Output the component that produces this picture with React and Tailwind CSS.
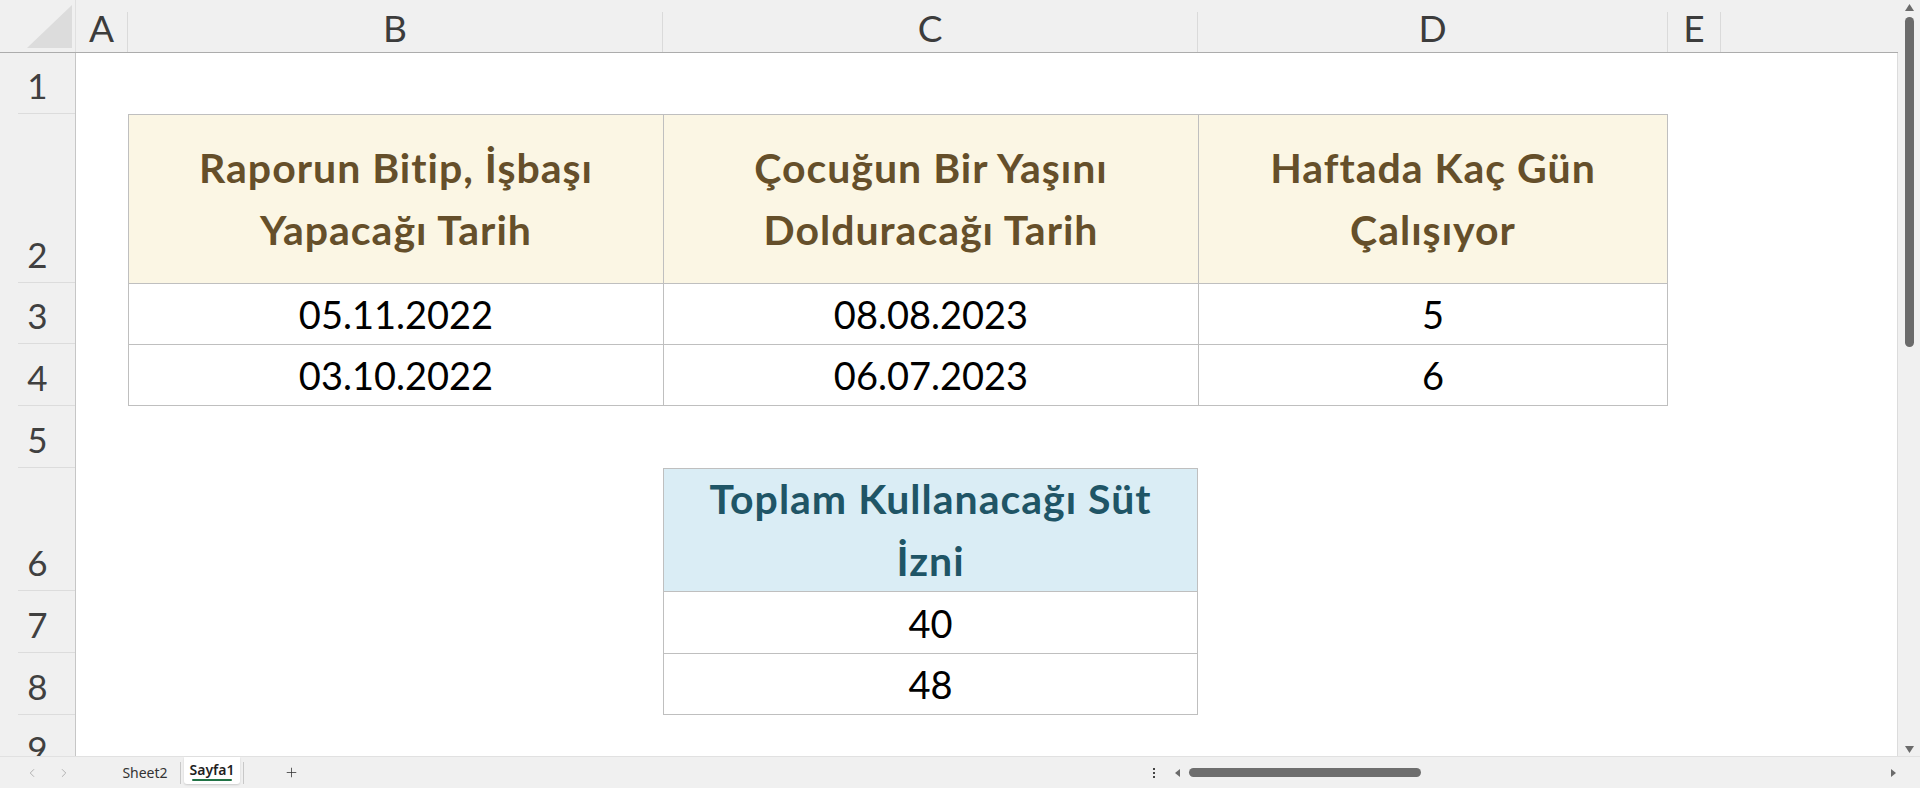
import React from "react";
import { ChevronLeft, ChevronRight, Plus } from "lucide-react";

const COLS = [
  { id: "A", w: "w-[52px]" },
  { id: "B", w: "w-[535px]" },
  { id: "C", w: "w-[535px]" },
  { id: "D", w: "w-[470px]" },
  { id: "E", w: "w-[53px]" },
];

const RowHead = ({ n }) => (
  <div className="w-[76px] shrink-0 flex flex-col bg-[#f0f0f0] border-r border-[#c6c6c6]">
    <div className="flex-1 flex items-end justify-center pb-[10px] text-[35px] leading-none text-[#404040]">
      {n}
    </div>
    <div className="h-px ml-[18px] bg-[#dcdcdc]" />
  </div>
);

const Row = ({ n, h, children }) => (
  <div className={`flex shrink-0 ${h}`}>
    <RowHead n={n} />
    {children}
  </div>
);

const Blank = ({ w }) => <div className={`${w} shrink-0`} />;

const Head1 = ({ w, last, children }) => (
  <div
    className={`${w} shrink-0 flex items-center justify-center text-center bg-[#fbf6e4] border-t border-l border-[#bfbfbf] text-[#654f2a] font-bold text-[41px] tracking-[1px] leading-[62px] ${last ? "border-r" : ""}`}
  >
    <div>{children}</div>
  </div>
);

const Data = ({ w, last, bottom, children }) => (
  <div
    className={`${w} shrink-0 flex items-center justify-center border-t border-l border-[#bfbfbf] text-[38px] leading-none text-black ${last ? "border-r" : ""} ${bottom ? "border-b" : ""}`}
  >
    {children}
  </div>
);

export default function App() {
  return (
    <div className="w-[1920px] h-[788px] overflow-hidden flex flex-col bg-[#f0f0f0] font-['Lato',sans-serif]">
      <div className="h-[756px] flex shrink-0">
        {/* grid */}
        <div className="w-[1898px] shrink-0 flex flex-col">
          {/* column letters */}
          <div className="h-[53px] shrink-0 flex bg-[#f0f0f0] border-b border-[#acacac]">
            <div className="w-[76px] shrink-0 flex items-end border-r border-[#e0e0e0]">
              <svg width="75" height="52" viewBox="0 0 75 52">
                <polygon points="27,48 72,48 72,5" fill="#dcdcdc" />
              </svg>
            </div>
            {COLS.map((c) => (
              <div
                key={c.id}
                className={`${c.w} shrink-0 mt-[12px] flex items-end justify-center pb-[6px] border-r border-[#dadada] text-[37px] leading-none text-[#3c3c3c]`}
              >
                {c.id}
              </div>
            ))}
            <div className="flex-1" />
          </div>

          {/* rows */}
          <div className="flex-1 min-h-0 overflow-hidden bg-white border-r border-[#dcdcdc] flex flex-col">
            <Row n="1" h="h-[61px]" />

            <Row n="2" h="h-[169px]">
              <Blank w="w-[52px]" />
              <Head1 w="w-[535px]">
                Raporun Bitip, İşbaşı
                <br />
                Yapacağı Tarih
              </Head1>
              <Head1 w="w-[535px]">
                Çocuğun Bir Yaşını
                <br />
                Dolduracağı Tarih
              </Head1>
              <Head1 w="w-[470px]" last>
                Haftada Kaç Gün
                <br />
                Çalışıyor
              </Head1>
            </Row>

            <Row n="3" h="h-[61px]">
              <Blank w="w-[52px]" />
              <Data w="w-[535px]">05.11.2022</Data>
              <Data w="w-[535px]">08.08.2023</Data>
              <Data w="w-[470px]" last>5</Data>
            </Row>

            <Row n="4" h="h-[62px]">
              <Blank w="w-[52px]" />
              <Data w="w-[535px]" bottom>03.10.2022</Data>
              <Data w="w-[535px]" bottom>06.07.2023</Data>
              <Data w="w-[470px]" last bottom>6</Data>
            </Row>

            <Row n="5" h="h-[62px]" />

            <Row n="6" h="h-[123px]">
              <Blank w="w-[52px]" />
              <Blank w="w-[535px]" />
              <div className="w-[535px] shrink-0 flex items-center justify-center text-center bg-[#daedf5] border-t border-l border-r border-[#bfbfbf] text-[#1f5566] font-bold text-[41px] tracking-[1px] leading-[62px]">
                <div>
                  Toplam Kullanacağı Süt
                  <br />
                  İzni
                </div>
              </div>
            </Row>

            <Row n="7" h="h-[62px]">
              <Blank w="w-[52px]" />
              <Blank w="w-[535px]" />
              <Data w="w-[535px]" last>40</Data>
            </Row>

            <Row n="8" h="h-[62px]">
              <Blank w="w-[52px]" />
              <Blank w="w-[535px]" />
              <Data w="w-[535px]" last bottom>48</Data>
            </Row>

            <Row n="9" h="h-[62px]" />
          </div>
        </div>

        {/* vertical scrollbar */}
        <div className="w-[22px] shrink-0 flex flex-col items-center bg-[#f0f0f0]">
          <svg className="mt-[4px]" width="9" height="7" viewBox="0 0 9 7">
            <path d="M4.5 0 L9 7 L0 7 Z" fill="#6b6b6b" />
          </svg>
          <div className="mt-[6px] w-[9px] h-[330px] rounded-full bg-[#6b6b6b]" />
          <div className="flex-1" />
          <svg className="mb-[3px]" width="9" height="7" viewBox="0 0 9 7">
            <path d="M0 0 L9 0 L4.5 7 Z" fill="#6b6b6b" />
          </svg>
        </div>
      </div>

      {/* sheet tabs / horizontal scroll */}
      <div className="h-[32px] shrink-0 flex border-t border-[#e1e1e1] bg-[#f0f0f0] font-['Noto_Sans',sans-serif] text-[14px] text-[#333]">
        <div className="w-[22px] shrink-0" />
        <div className="w-[20px] shrink-0 flex items-center justify-center text-[#a8a8a8]">
          <ChevronLeft size={14} strokeWidth={1.5} />
        </div>
        <div className="w-[12px] shrink-0" />
        <div className="w-[20px] shrink-0 flex items-center justify-center text-[#a8a8a8]">
          <ChevronRight size={14} strokeWidth={1.5} />
        </div>
        <div className="w-[36px] shrink-0" />
        <div className="w-[70px] shrink-0 flex items-center justify-center">Sheet2</div>
        <div className="w-px h-[22px] self-center bg-[#c8c8c8]" />
        <div className="w-[3px] shrink-0" />
        <div className="w-[56px] h-[27px] shrink-0 flex flex-col items-center bg-white rounded-b-[3px] shadow-[0_1px_2px_rgba(0,0,0,0.15)]">
          <div className="mt-[4px] font-semibold text-[#1f1f1f] leading-[17px]">Sayfa1</div>
          <div className="mt-[1px] w-[40px] h-[2px] bg-[#217346] rounded-full" />
        </div>
        <div className="w-[3px] shrink-0" />
        <div className="w-px h-[22px] self-center bg-[#c8c8c8]" />
        <div className="w-[37px] shrink-0" />
        <div className="w-[20px] shrink-0 flex items-center justify-center text-[#333]">
          <Plus size={15} strokeWidth={1.25} />
        </div>
        <div className="w-[848px] shrink-0" />
        <div className="w-[10px] shrink-0 flex flex-col items-center justify-center gap-[2px]">
          <div className="w-[2px] h-[2px] bg-[#444]" />
          <div className="w-[2px] h-[2px] bg-[#444]" />
          <div className="w-[2px] h-[2px] bg-[#444]" />
        </div>
        <div className="w-[16px] shrink-0" />
        <div className="w-[8px] shrink-0 flex items-center">
          <svg width="5" height="8" viewBox="0 0 5 8">
            <path d="M5 0 L5 8 L0 4 Z" fill="#6b6b6b" />
          </svg>
        </div>
        <div className="w-[6px] shrink-0" />
        <div className="w-[232px] h-[9px] self-center rounded-full bg-[#6e6e6e]" />
        <div className="flex-1" />
        <div className="w-[8px] shrink-0 flex items-center">
          <svg width="5" height="8" viewBox="0 0 5 8">
            <path d="M0 0 L5 4 L0 8 Z" fill="#6b6b6b" />
          </svg>
        </div>
        <div className="w-[21px] shrink-0" />
      </div>
    </div>
  );
}
